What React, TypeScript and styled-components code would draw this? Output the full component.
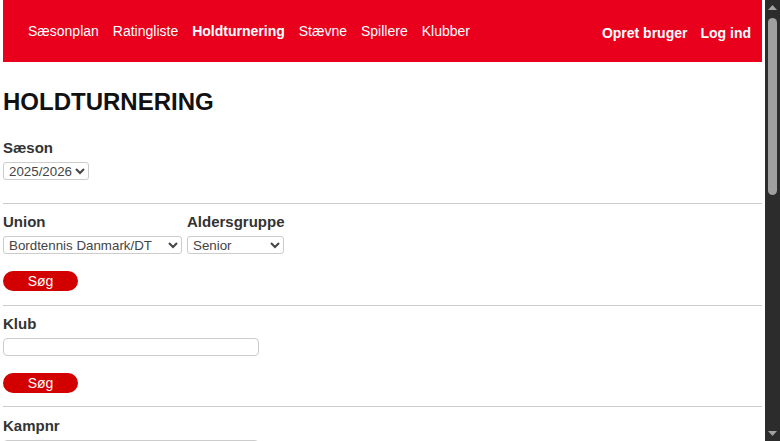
import React from "react";
import styled, { createGlobalStyle } from "styled-components";

const Global = createGlobalStyle`
  html, body {
    margin: 0;
    height: 100%;
    background: #ffffff;
  }
  body {
    font-family: "Liberation Sans", Arial, sans-serif;
    color: #333333;
    overflow: hidden;
  }
  #root {
    height: 100%;
  }
`;

const Window = styled.div`
  display: flex;
  height: 100%;
`;

const Viewport = styled.div`
  flex: 1;
  min-width: 0;
  overflow: hidden;
  background: #ffffff;
`;

const Page = styled.div`
  padding: 0 3px;
  min-height: 1025px;
  box-sizing: border-box;
  background: #ffffff;
`;

const Scrollbar = styled.div`
  width: 15px;
  flex: none;
  background: #2c2c2c;
  display: flex;
  flex-direction: column;
  align-items: center;
`;

const ArrowBox = styled.div`
  height: 15px;
  width: 15px;
  display: flex;
  align-items: center;
  justify-content: center;
`;

const Track = styled.div`
  flex: 1;
  width: 100%;
  padding: 3px 0 0 3px;
  box-sizing: border-box;
`;

const Thumb = styled.div`
  width: 9px;
  height: 177px;
  border-radius: 5px;
  background: #9f9f9f;
`;

const Header = styled.header`
  height: 62px;
  background: #e8001c;
  display: flex;
  align-items: center;
  justify-content: space-between;
  padding: 0 11px 0 25px;
`;

const Nav = styled.nav`
  display: flex;
  gap: 14px;
`;

const NavLink = styled.a<{ $active?: boolean }>`
  color: #ffffff;
  font-size: 14px;
  font-weight: ${(p) => (p.$active ? 700 : 400)};
  text-decoration: none;
  line-height: 16px;
`;

const UserNav = styled.div`
  display: flex;
  gap: 13px;
  padding-top: 3px;
`;

const UserLink = styled.a`
  color: #ffffff;
  font-size: 14px;
  font-weight: 700;
  text-decoration: none;
  line-height: 16px;
`;

const Title = styled.h1`
  margin: 0;
  padding-top: 26px;
  font-size: 24px;
  line-height: 28px;
  font-weight: 700;
  color: #111111;
`;

const Section = styled.section<{ $top?: number; $bottom?: number }>`
  padding-top: ${(p) => p.$top ?? 9}px;
  padding-bottom: ${(p) => p.$bottom ?? 14}px;
`;

const Divider = styled.hr`
  margin: 0;
  border: 0;
  border-top: 1px solid #cccccc;
`;

const FieldRow = styled.div`
  display: flex;
  gap: 5px;
`;

const Field = styled.div`
  display: flex;
  flex-direction: column;
  gap: 6px;
`;

const Label = styled.label`
  font-size: 15px;
  line-height: 17px;
  font-weight: 700;
  color: #333333;
`;

const Select = styled.select<{ $w: number }>`
  width: ${(p) => p.$w}px;
  height: 18px;
  box-sizing: border-box;
  font-family: "Liberation Sans", Arial, sans-serif;
  font-size: 13.333px;
  color: #444444;
  background: #ffffff;
  border: 1px solid #cccccc;
  border-radius: 3px;
  padding: 0 0 0 1px;
  margin: 0;
`;

const TextInput = styled.input`
  width: 256px;
  height: 18px;
  box-sizing: border-box;
  border: 1px solid #cccccc;
  border-radius: 4px;
  background: #ffffff;
  margin: 0;
  font-family: "Liberation Sans", Arial, sans-serif;
  font-size: 13.333px;
`;

const Button = styled.button`
  display: block;
  margin-top: 17px;
  width: 75px;
  height: 20px;
  border: 0;
  border-radius: 10px;
  background: #d30000;
  color: #ffffff;
  font-family: "Liberation Sans", Arial, sans-serif;
  font-size: 14px;
  line-height: 20px;
  padding: 0;
`;

const Arrow = ({ down }: { down?: boolean }) => (
  <svg width="9" height="5" viewBox="0 0 9 5">
    <path d={down ? "M0 0 L9 0 L4.5 5 Z" : "M0 5 L9 5 L4.5 0 Z"} fill="#a3a3a3" />
  </svg>
);

export default function App() {
  return (
    <>
      <Global />
      <Window>
        <Viewport>
          <Page>
            <Header>
              <Nav>
                <NavLink href="#">Sæsonplan</NavLink>
                <NavLink href="#">Ratingliste</NavLink>
                <NavLink href="#" $active>
                  Holdturnering
                </NavLink>
                <NavLink href="#">Stævne</NavLink>
                <NavLink href="#">Spillere</NavLink>
                <NavLink href="#">Klubber</NavLink>
              </Nav>
              <UserNav>
                <UserLink href="#">Opret bruger</UserLink>
                <UserLink href="#">Log ind</UserLink>
              </UserNav>
            </Header>
            <Title>HOLDTURNERING</Title>
            <Section $top={23} $bottom={23}>
              <Field>
                <Label>Sæson</Label>
                <Select $w={86} defaultValue="2025/2026">
                  <option>2025/2026</option>
                  <option>2024/2025</option>
                </Select>
              </Field>
            </Section>
            <Divider />
            <Section>
              <FieldRow>
                <Field>
                  <Label>Union</Label>
                  <Select $w={179} defaultValue="Bordtennis Danmark/DT">
                    <option>Bordtennis Danmark/DT</option>
                  </Select>
                </Field>
                <Field>
                  <Label>Aldersgruppe</Label>
                  <Select $w={97} defaultValue="Senior">
                    <option>Senior</option>
                    <option>Ungdom</option>
                    <option>Veteran</option>
                  </Select>
                </Field>
              </FieldRow>
              <Button>Søg</Button>
            </Section>
            <Divider />
            <Section $top={9} $bottom={13}>
              <Field>
                <Label>Klub</Label>
                <TextInput type="text" />
              </Field>
              <Button>Søg</Button>
            </Section>
            <Divider />
            <Section $top={10}>
              <Field>
                <Label>Kampnr</Label>
                <TextInput type="text" />
              </Field>
              <Button>Søg</Button>
            </Section>
            <Divider />
          </Page>
        </Viewport>
        <Scrollbar>
          <ArrowBox>
            <Arrow />
          </ArrowBox>
          <Track>
            <Thumb />
          </Track>
          <ArrowBox>
            <Arrow down />
          </ArrowBox>
        </Scrollbar>
      </Window>
    </>
  );
}
